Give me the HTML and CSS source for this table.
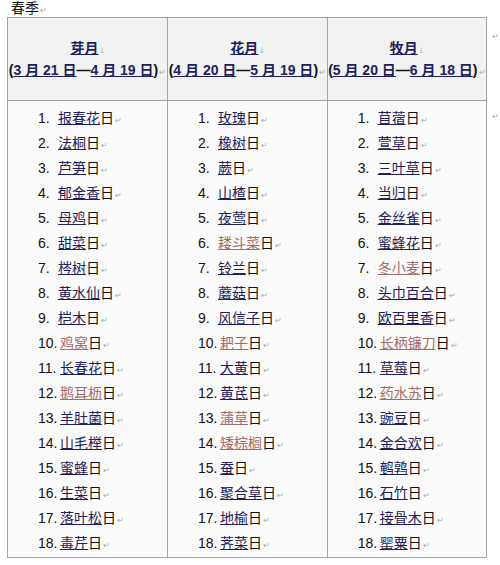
FILE: index.html
```html
<!DOCTYPE html>
<html lang="zh">
<head>
<meta charset="utf-8">
<title>春季</title>
<link rel="stylesheet" href="styles.css">
</head>
<body>
<p class="title">春季<span class="pm">↵</span></p>
<table class="cal">
  <colgroup><col class="c1"><col class="c2"><col class="c3"><col class="c4"></colgroup>
  <tr>
    <th><a class="hm">芽月</a><span class="arr">↓</span><br>(<a>3 月 21 日</a>—<a>4 月 19 日</a>)<span class="pm">↵</span></th>
    <th><a class="hm">花月</a><span class="arr">↓</span><br>(<a>4 月 20 日</a>—<a>5 月 19 日</a>)<span class="pm">↵</span></th>
    <th><a class="hm">牧月</a><span class="arr">↓</span><br>(<a>5 月 20 日</a>—<a>6 月 18 日</a>)<span class="pm">↵</span></th>
    <td class="eor eor-h"><span class="pm">↵</span></td>
  </tr>
  <tr>
    <td class="body">
      <ol class="days">
        <li><span class="n">1.</span><a>报春花</a>日<span class="pm">↵</span></li>
        <li><span class="n">2.</span><a>法桐</a>日<span class="pm">↵</span></li>
        <li><span class="n">3.</span><a>芦笋</a>日<span class="pm">↵</span></li>
        <li><span class="n">4.</span><a>郁金香</a>日<span class="pm">↵</span></li>
        <li><span class="n">5.</span><a>母鸡</a>日<span class="pm">↵</span></li>
        <li><span class="n">6.</span><a>甜菜</a>日<span class="pm">↵</span></li>
        <li><span class="n">7.</span><a>梣树</a>日<span class="pm">↵</span></li>
        <li><span class="n">8.</span><a>黄水仙</a>日<span class="pm">↵</span></li>
        <li><span class="n">9.</span><a>桤木</a>日<span class="pm">↵</span></li>
        <li><span class="n n2">10.</span><a class="new">鸡窝</a>日<span class="pm">↵</span></li>
        <li><span class="n n2">11.</span><a>长春花</a>日<span class="pm">↵</span></li>
        <li><span class="n n2">12.</span><a class="new">鹅耳枥</a>日<span class="pm">↵</span></li>
        <li><span class="n n2">13.</span><a>羊肚菌</a>日<span class="pm">↵</span></li>
        <li><span class="n n2">14.</span><a>山毛榉</a>日<span class="pm">↵</span></li>
        <li><span class="n n2">15.</span><a>蜜蜂</a>日<span class="pm">↵</span></li>
        <li><span class="n n2">16.</span><a>生菜</a>日<span class="pm">↵</span></li>
        <li><span class="n n2">17.</span><a>落叶松</a>日<span class="pm">↵</span></li>
        <li><span class="n n2">18.</span><a>毒芹</a>日<span class="pm">↵</span></li>
      </ol>
    </td>
    <td class="body">
      <ol class="days">
        <li><span class="n">1.</span><a>玫瑰</a>日<span class="pm">↵</span></li>
        <li><span class="n">2.</span><a>橡树</a>日<span class="pm">↵</span></li>
        <li><span class="n">3.</span><a>蕨</a>日<span class="pm">↵</span></li>
        <li><span class="n">4.</span><a>山楂</a>日<span class="pm">↵</span></li>
        <li><span class="n">5.</span><a>夜莺</a>日<span class="pm">↵</span></li>
        <li><span class="n">6.</span><a class="new">耧斗菜</a>日<span class="pm">↵</span></li>
        <li><span class="n">7.</span><a>铃兰</a>日<span class="pm">↵</span></li>
        <li><span class="n">8.</span><a>蘑菇</a>日<span class="pm">↵</span></li>
        <li><span class="n">9.</span><a>风信子</a>日<span class="pm">↵</span></li>
        <li><span class="n n2">10.</span><a class="new">耙子</a>日<span class="pm">↵</span></li>
        <li><span class="n n2">11.</span><a>大黄</a>日<span class="pm">↵</span></li>
        <li><span class="n n2">12.</span><a>黄芪</a>日<span class="pm">↵</span></li>
        <li><span class="n n2">13.</span><a class="new">蒲草</a>日<span class="pm">↵</span></li>
        <li><span class="n n2">14.</span><a class="new">矮棕榈</a>日<span class="pm">↵</span></li>
        <li><span class="n n2">15.</span><a>蚕</a>日<span class="pm">↵</span></li>
        <li><span class="n n2">16.</span><a>聚合草</a>日<span class="pm">↵</span></li>
        <li><span class="n n2">17.</span><a>地榆</a>日<span class="pm">↵</span></li>
        <li><span class="n n2">18.</span><a>荠菜</a>日<span class="pm">↵</span></li>
      </ol>
    </td>
    <td class="body">
      <ol class="days">
        <li><span class="n">1.</span><a>苜蓿</a>日<span class="pm">↵</span></li>
        <li><span class="n">2.</span><a>萱草</a>日<span class="pm">↵</span></li>
        <li><span class="n">3.</span><a>三叶草</a>日<span class="pm">↵</span></li>
        <li><span class="n">4.</span><a>当归</a>日<span class="pm">↵</span></li>
        <li><span class="n">5.</span><a>金丝雀</a>日<span class="pm">↵</span></li>
        <li><span class="n">6.</span><a>蜜蜂花</a>日<span class="pm">↵</span></li>
        <li><span class="n">7.</span><a class="new">冬小麦</a>日<span class="pm">↵</span></li>
        <li><span class="n">8.</span><a>头巾百合</a>日<span class="pm">↵</span></li>
        <li><span class="n">9.</span><a>欧百里香</a>日<span class="pm">↵</span></li>
        <li><span class="n n2">10.</span><a class="new">长柄镰刀</a>日<span class="pm">↵</span></li>
        <li><span class="n n2">11.</span><a>草莓</a>日<span class="pm">↵</span></li>
        <li><span class="n n2">12.</span><a class="new">药水苏</a>日<span class="pm">↵</span></li>
        <li><span class="n n2">13.</span><a>豌豆</a>日<span class="pm">↵</span></li>
        <li><span class="n n2">14.</span><a>金合欢</a>日<span class="pm">↵</span></li>
        <li><span class="n n2">15.</span><a>鹌鹑</a>日<span class="pm">↵</span></li>
        <li><span class="n n2">16.</span><a>石竹</a>日<span class="pm">↵</span></li>
        <li><span class="n n2">17.</span><a>接骨木</a>日<span class="pm">↵</span></li>
        <li><span class="n n2">18.</span><a>罂粟</a>日<span class="pm">↵</span></li>
      </ol>
    </td>
    <td class="eor"><span class="pm">↵</span></td>
  </tr>
</table>
</body>
</html>
```
FILE: styles.css
```css
body {
  margin: 0;
  background: #ffffff;
  color: #111111;
  font-family: "Liberation Sans", "Noto Sans CJK SC", sans-serif;
  font-size: 14px;
}

.title {
  margin: 0;
  padding: 0 0 0 11px;
  height: 17px;
  line-height: 16px;
}

.pm {
  color: #a8a8a8;
  font-size: 8px;
  font-weight: normal;
  margin-left: 1px;
}

.cal {
  margin-left: 7px;
  border-collapse: collapse;
  table-layout: fixed;
}

.c1 { width: 163px; }
.c2 { width: 162px; }
.c3 { width: 161px; }
.c4 { width: 9px; }

.cal th {
  height: 80px;
  padding: 2px 0 0;
  background: #f2f2f2;
  border: 1px solid #a3a3a3;
  font-weight: bold;
  line-height: 20px;
  text-align: center;
  vertical-align: middle;
  white-space: nowrap;
}

.cal a {
  color: #1f1f5c;
  text-decoration: underline;
}

.cal a.new {
  color: #a46d6d;
}

.arr {
  color: #9a9a9a;
  font-size: 10px;
  font-weight: normal;
  margin-left: 1px;
}

.cal td.body {
  padding: 5px 0 1px 30px;
  background: #fafafa;
  border: 1px solid #a3a3a3;
  vertical-align: top;
}

.cal td.eor {
  padding: 5px 0 0 4px;
  border: none;
  vertical-align: top;
  background: #ffffff;
}

.cal td.eor-h {
  padding-top: 8px;
}

.days {
  list-style: none;
  margin: 0;
  padding: 0;
}

.days li {
  height: 25px;
  line-height: 25px;
  white-space: nowrap;
}

.n {
  display: inline-block;
  width: 20px;
}

.n2 {
  width: 22px;
}
```
